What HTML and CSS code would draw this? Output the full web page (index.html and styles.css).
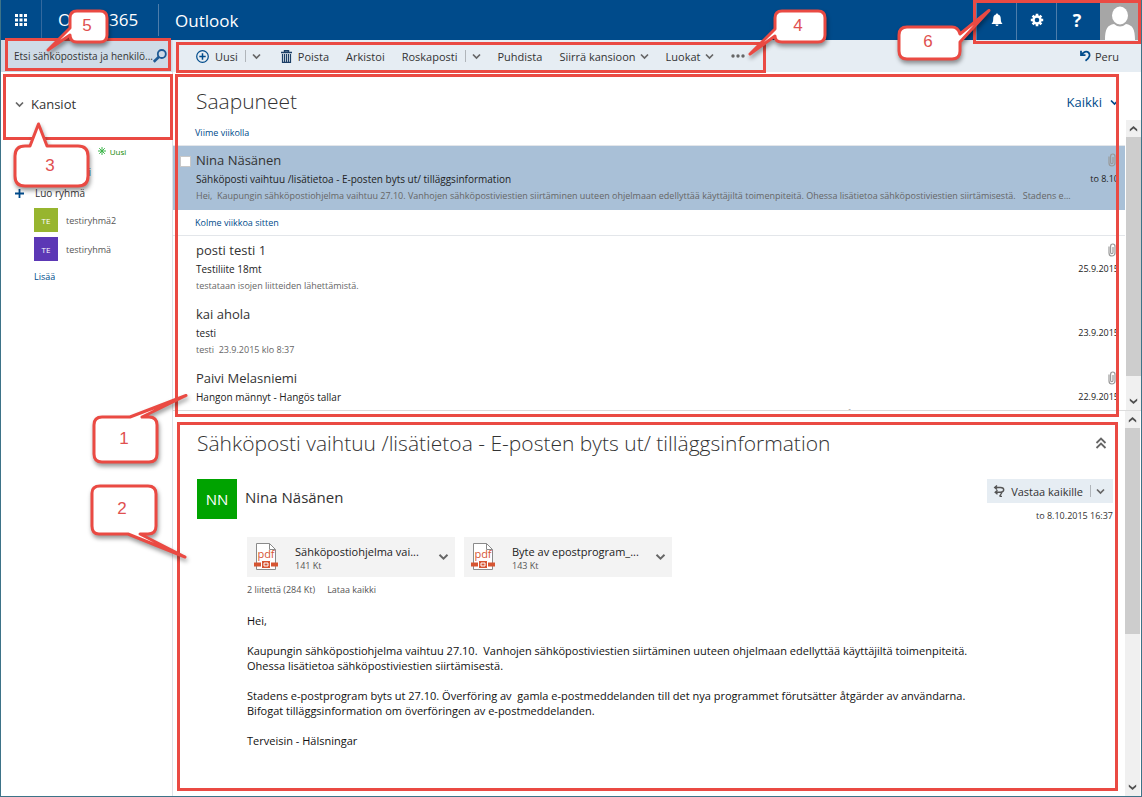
FILE: index.html
```html
<!DOCTYPE html>
<html lang="fi">
<head>
<meta charset="utf-8">
<title>Outlook</title>
<link rel="stylesheet" href="styles.css">
</head>
<body>
<svg class="defs" width="0" height="0" aria-hidden="true">
  <symbol id="chev" viewBox="0 0 9 7"><path d="M1 1.5 4.5 5 8 1.5" fill="none" stroke="currentColor" stroke-width="1.7"/></symbol>
  <symbol id="clip" viewBox="0 0 8 14"><path d="M1 3.5v6.5a3 3 0 0 0 6 0V3.2a2.2 2.2 0 0 0-4.400 0V9.500a1.200 1.200 0 0 0 2.400 0V4" fill="none" stroke="currentColor" stroke-width="1.2"/></symbol>
  <symbol id="sbarrow" viewBox="0 0 9 6"><path d="M0.800 5.500V3.200L4.500 0 8.200 3.200V5.500L4.500 2.500z" fill="#505050"/></symbol>
  <symbol id="pdf" viewBox="0 0 24 30">
    <path d="M2.500 1.500H15.500L21.500 7.500V27.500H2.500z" fill="#fff" stroke="#8a8a8a"/>
    <path d="M15.500 1.500V7.500H21.500" fill="none" stroke="#8a8a8a"/>
    <path d="M0 20.500H24V24.500H0z" fill="#d65532"/>
    <path d="M7.500 18.500H16.500V26.500H7.500z" fill="#d65532" stroke="#fff"/>
    <path d="M10 21H14V24H10z" fill="none" stroke="#fff"/>
    <text x="12" y="16" text-anchor="middle" class="pdf-label">pdf</text>
  </symbol>
</svg>
<div class="window">
  <header class="topbar">
    <button class="waffle" aria-label="Sovellukset">
      <svg width="14" height="14" viewBox="0 0 14 14" fill="#fff"><path d="M1 1h3v3H1zM5.500 1h3v3h-3zM10 1h3v3h-3zM1 5.500h3v3H1zM5.500 5.500h3v3h-3zM10 5.500h3v3h-3zM1 10h3v3H1zM5.500 10h3v3h-3zM10 10h3v3h-3z"/></svg>
    </button>
    <a class="brand" href="#">Office 365</a>
    <a class="app" href="#">Outlook</a>
    <nav class="tools">
      <button aria-label="Ilmoitukset"><svg width="12" height="14" viewBox="0 0 12 14"><path d="M6 0.500c.7 0 1 .4 1 1C9 2 9.800 3.500 9.800 6c0 2.800.6 3.800 1.700 5H.5C1.600 9.800 2.200 8.800 2.200 6 2.200 3.500 3 2 5 1.500c0-.6.3-1 1-1zM4.500 11.600h3a1.500 1.500 0 0 1-3 0z" fill="#fff"/></svg></button>
      <button aria-label="Asetukset"><svg width="14" height="14" viewBox="-7 -7 14 14"><g fill="#fff"><path id="teeth" d="M-1.300-6.200h2.600v3h-2.600zM-1.300 3.200h2.600v3h-2.600zM-6.200-1.300h3v2.600h-3zM3.200-1.300h3v2.600h-3z"/><use href="#teeth" transform="rotate(45)"/></g><circle r="3.500" fill="none" stroke="#fff" stroke-width="2.400"/></svg></button>
      <button class="help" aria-label="Ohje">?</button>
      <button class="me" aria-label="Oma profiili"><svg width="40" height="40" viewBox="0 0 40 40"><path d="M0 3h40v37H0z" fill="#a6a6a6"/><ellipse cx="20" cy="15.500" rx="8" ry="9" fill="#fff"/><path d="M5 40C5 29 7.500 25 14 24Q20 29 26 24C32.500 25 35 29 35 40z" fill="#fff"/></svg></button>
    </nav>
  </header>
  <div class="columns">
    <aside class="side">
      <form class="search">
        <input type="text" aria-label="Haku" placeholder="Etsi sähköpostista ja henkilö...">
        <button type="button" aria-label="Etsi"><svg width="14" height="14" viewBox="1 0 14 14"><circle cx="9.800" cy="5" r="4" fill="none" stroke="#1f5a94" stroke-width="1.800"/><path d="M7 7.800 1.800 12.800" stroke="#1f5a94" stroke-width="2.600"/></svg></button>
      </form>
      <button class="folders"><svg width="9" height="7"><use href="#chev"/></svg>Kansiot</button>
      <div class="groups">
        <div class="ghead"><span>Ryhmät</span><span class="new"><svg width="8" height="8" viewBox="-4 -4 8 8" stroke="#3db54a"><path d="M0-4V4M-4 0H4M-2.800-2.800 2.800 2.800M-2.800 2.800 2.800-2.800"/></svg>Uusi</span></div>
        <a class="browse" href="#">Etsi</a>
        <button class="create"><svg width="9" height="9" viewBox="0 0 9 9"><path d="M4.500 0V9M0 4.500H9" stroke="#004b8b" stroke-width="1.800"/></svg>Luo ryhmä</button>
        <a class="group" href="#"><span class="tile">TE</span>testiryhmä2</a>
        <a class="group" href="#"><span class="tile violet">TE</span>testiryhmä</a>
        <a class="more" href="#">Lisää</a>
      </div>
    </aside>
    <main class="main">
      <div class="toolbar">
        <button class="new-btn"><svg width="13" height="13" viewBox="0 0 13 13" fill="none" stroke="#004b8b"><circle cx="6.500" cy="6.500" r="5.800" stroke-width="1.200"/><path d="M6.500 3.300V9.700M3.300 6.500H9.700" stroke-width="1.500"/></svg>Uusi</button>
        <span class="bar"></span>
        <button class="drop" aria-label="Lisää uusia"><svg width="9" height="7"><use href="#chev"/></svg></button>
        <button class="delete"><svg width="11" height="13" viewBox="0 0 11 13" fill="none" stroke="#1c3f66"><path d="M0 2.500H11M3.500 2V.7H7.500V2" stroke-width="1.400"/><path d="M1.500 4V12.300H9.500V4M3.500 4V12M5.500 4V12M7.500 4V12" stroke-width="1.200"/></svg>Poista</button>
        <button class="tb">Arkistoi</button>
        <button class="tb">Roskaposti</button>
        <span class="bar"></span>
        <button class="drop" aria-label="Roskapostivalinnat"><svg width="9" height="7"><use href="#chev"/></svg></button>
        <button class="tb">Puhdista</button>
        <button class="tb">Siirrä kansioon<svg width="9" height="7"><use href="#chev"/></svg></button>
        <button class="tb">Luokat<svg width="9" height="7"><use href="#chev"/></svg></button>
        <button class="tb" aria-label="Lisää toimintoja"><svg width="14" height="4" viewBox="0 0 14 4" fill="#666"><circle cx="2" cy="2" r="1.700"/><circle cx="7" cy="2" r="1.700"/><circle cx="12" cy="2" r="1.700"/></svg></button>
        <button class="undo"><svg width="11" height="12" viewBox="0 0 11 12" fill="none" stroke="#004b8b" stroke-width="1.800"><path d="M1.500 5C3.500 1.500 6.500.8 8.500 2.500 10.500 4.500 9.800 8 5.500 10.800M1 .8V5.200H5.500"/></svg>Peru</button>
      </div>
      <section class="list">
        <div class="list-body">
          <div class="list-head"><h1>Saapuneet</h1><button class="filter">Kaikki<svg width="9" height="7"><use href="#chev"/></svg></button></div>
          <h2 class="period">Viime viikolla</h2>
          <article class="mail selected">
            <input type="checkbox" aria-label="Valitse viesti">
            <h3>Nina Näsänen</h3><svg class="clip" width="8" height="14"><use href="#clip"/></svg>
            <p class="subject">Sähköposti vaihtuu /lisätietoa - E-posten byts ut/ tilläggsinformation</p><time>to 8.10</time>
            <p class="preview">Hei, &nbsp;Kaupungin sähköpostiohjelma vaihtuu 27.10. Vanhojen sähköpostiviestien siirtäminen uuteen ohjelmaan edellyttää käyttäjiltä toimenpiteitä. Ohessa lisätietoa sähköpostiviestien siirtämisestä. &nbsp; Stadens e...</p>
          </article>
          <h2 class="period">Kolme viikkoa sitten</h2>
          <article class="mail">
            <h3>posti testi 1</h3><svg class="clip" width="8" height="14"><use href="#clip"/></svg>
            <p class="subject">Testiliite 18mt</p><time>25.9.2015</time>
            <p class="preview">testataan isojen liitteiden lähettämistä.</p>
          </article>
          <article class="mail">
            <h3>kai ahola</h3>
            <p class="subject">testi</p><time>23.9.2015</time>
            <p class="preview">testi &nbsp;23.9.2015 klo 8:37</p>
          </article>
          <article class="mail">
            <h3>Paivi Melasniemi</h3><svg class="clip" width="8" height="14"><use href="#clip"/></svg>
            <p class="subject">Hangon männyt - Hangös tallar</p><time>22.9.2015</time>
            <p class="preview">Tervetuloa Hangon Mäntyihin! Sinulle on avattu uusi varaus syksyn ajalle. Tallar i Hangö välkomnar er som gäst, alla hus är lediga hela hösten nu och även i Åbo finns det lediga</p>
          </article>
        </div>
        <div class="scroll upper"><svg width="9" height="6"><use href="#sbarrow"/></svg><div class="thumb"></div><svg class="down" width="9" height="6"><use href="#sbarrow"/></svg></div>
      </section>
      <section class="reading">
        <div class="read-body">
          <div class="read-title"><h2>Sähköposti vaihtuu /lisätietoa - E-posten byts ut/ tilläggsinformation</h2>
            <button aria-label="Tiivistä"><svg width="12" height="12" viewBox="0 0 12 12" fill="none" stroke="#666" stroke-width="1.800"><path d="M1.500 6 6 1.500 10.500 6M1.500 11 6 6.500 10.500 11"/></svg></button></div>
          <div class="from">
            <span class="avatar">NN</span><span class="name">Nina Näsänen</span>
            <div class="actions">
              <div class="reply"><button><svg width="12" height="12" viewBox="0 0 12 12" fill="none" stroke="#555" stroke-width="1.400"><path d="M4 .5 1.700 2.500 4 4.500M1.700 2.500H7.500C11.800 2.500 11.800 7 7.500 7.200H2M4.500 5.200 2.200 7.200 4.500 9.200M9.500 6.500 6.500 11.500M7 11.500H9"/></svg>Vastaa kaikille</button><span class="bar"></span><button class="drop" aria-label="Vastausvalinnat"><svg width="9" height="7"><use href="#chev"/></svg></button></div>
              <time>to 8.10.2015 16:37</time>
            </div>
          </div>
          <div class="content">
            <div class="files">
              <button class="file"><svg width="24" height="30"><use href="#pdf"/></svg><span><b>Sähköpostiohjelma vai...</b><small>141 Kt</small></span><svg class="open" width="11" height="8"><use href="#chev"/></svg></button>
              <button class="file"><svg width="24" height="30"><use href="#pdf"/></svg><span><b>Byte av epostprogram_...</b><small>143 Kt</small></span><svg class="open" width="11" height="8"><use href="#chev"/></svg></button>
            </div>
            <div class="file-info"><span>2 liitettä (284 Kt)</span><a href="#">Lataa kaikki</a></div>
            <div class="message">
              <p>Hei,</p>
              <p>Kaupungin sähköpostiohjelma vaihtuu 27.10. &nbsp;Vanhojen sähköpostiviestien siirtäminen uuteen ohjelmaan edellyttää käyttäjiltä toimenpiteitä.<br>Ohessa lisätietoa sähköpostiviestien siirtämisestä.</p>
              <p>Stadens e-postprogram byts ut 27.10. Överföring av &nbsp;gamla e-postmeddelanden till det nya programmet förutsätter åtgärder av användarna.<br>Bifogat tilläggsinformation om överföringen av e-postmeddelanden.</p>
              <p>Terveisin - Hälsningar</p>
            </div>
          </div>
        </div>
        <div class="scroll lower"><svg width="9" height="6"><use href="#sbarrow"/></svg><div class="thumb"></div><svg class="down" width="9" height="6"><use href="#sbarrow"/></svg></div>
      </section>
    </main>
  </div>
  <div class="notes">
    <div class="frame f-search"></div>
    <div class="frame f-toolbar"></div>
    <div class="frame f-folders"></div>
    <div class="frame f-list"></div>
    <div class="frame f-reading"></div>
    <div class="frame f-account"></div>
    <svg class="callouts" width="840" height="600" viewBox="0 0 840 600">
      <path d="M142 417H149Q157 417 157 425V454Q157 462 149 462H102Q94 462 94 454V425Q94 417 102 417H130L186 395.500z"/>
      <path d="M128 534H99Q92 534 92 526V493Q92 486 100 486H148Q156 486 156 494V526Q156 534 148 534H140L185 557z"/>
      <path d="M30 146 38.500 124 47 146H78Q88 146 88 156V176Q88 186 78 186H25Q15 186 15 176V156Q15 146 25 146z"/>
      <path d="M775 29V18Q775 11 782 11H818Q825 11 825 18V35Q825 42 818 42H782Q775 42 775 36L750 54z"/>
      <path d="M70 28V18Q70 11 77 11H100Q107 11 107 18V35Q107 42 100 42H77Q70 42 70 35L48 50z"/>
      <text x="124" y="444">1</text><text x="122" y="514">2</text><text x="50" y="171">3</text><text x="798" y="31">4</text><text x="87" y="31">5</text>
    </svg>
    <svg class="callouts right" width="252" height="70" viewBox="890 0 252 70">
      <path d="M960 34 989 10.500 960 42V51Q960 59 952 59H907Q899 59 899 51V35Q899 27 907 27H952Q958 27 960 34z"/>
      <text x="928" y="47">6</text>
    </svg>
  </div>
</div>
</body>
</html>
```
FILE: styles.css
```css
* { box-sizing: border-box; }
body { margin: 0; font-family: "Open Sans", "Noto Sans", sans-serif; font-size: 11px; color: #333; background: #fff; }
h1, h2, h3, p { margin: 0; font-weight: 400; }
button { border: 0; background: none; padding: 0; font: inherit; color: inherit; display: flex; align-items: center; white-space: nowrap; }
a { color: inherit; text-decoration: none; }
svg { flex: none; display: block; }
.defs { position: absolute; }
.window { position: relative; display: flex; flex-direction: column; height: 100vh; min-height: 600px; border: solid #3d7388; border-width: 0 1px 1px; overflow: hidden; }

.topbar { display: flex; align-items: center; height: 40px; flex: none; background: #004b8b; color: #fff; font-size: 17px; }
.waffle { width: 41px; height: 40px; justify-content: center; border-right: 1px solid #33699f; }
.brand { width: 117px; padding-left: 16px; line-height: 32px; border-right: 1px solid #4d7dab; }
.app { padding-left: 16px; }
.tools { display: flex; margin-left: auto; padding-right: 1px; }
.tools button { width: 40px; height: 40px; justify-content: center; border-left: 1px solid #4d7dab; }
.tools .help { font-weight: 700; font-size: 18px; width: 44px; padding-right: 3px; }
.tools .me { border: 0; }

.columns { display: flex; flex: 1; min-height: 0; }
.side { width: 172px; flex: none; border-right: 1px solid #dfe3e8; }
.search { display: flex; align-items: center; height: 32px; padding: 0 5px 0 13px; background: #cfdbe7; }
.search input { flex: 1; min-width: 0; padding: 0; border: 0; outline: 0; background: none; font: inherit; font-size: 10px; color: #333; }
.search input::placeholder { color: #333; opacity: 1; }
.folders { height: 64px; padding-left: 14px; gap: 7px; font-size: 13px; }
.folders svg { color: #666; }
.groups { display: flex; flex-direction: column; align-items: flex-start; padding-top: 6px; font-size: 10px; }
.ghead { display: flex; align-items: center; gap: 28px; height: 18px; padding-left: 33px; }
.new { display: flex; align-items: center; gap: 4px; color: #108a00; font-size: 8px; }
.browse { width: 90px; height: 21px; line-height: 24px; text-align: right; color: #004b8b; }
.create { height: 24px; padding-left: 14px; gap: 11px; }
.group { display: flex; align-items: center; gap: 8px; height: 24px; margin: 3px 0 2px 33px; color: #555; font-size: 9px; }
.tile { width: 24px; height: 24px; display: grid; place-items: center; background: #97b52f; color: #fff; font-size: 8px; }
.violet { background: #5c38b5; }
.more { margin: 7px 0 0 33px; font-size: 9px; color: #004b8b; }

.main { flex: 1; min-width: 0; display: flex; flex-direction: column; }
.toolbar { display: flex; align-items: center; height: 32px; flex: none; padding: 0 22px 0 23px; background: #e6edf3; }
.toolbar button { height: 30px; gap: 4px; }
.toolbar svg { color: #666; }
.toolbar .new-btn, .toolbar .delete { gap: 6px; }
.bar { width: 1px; height: 12px; margin: 0 6px 0 7px; background: #b0b5ba; }
.delete { margin-left: 20px; }
.tb { margin-left: 17px; }
.toolbar .undo { margin-left: auto; gap: 4px; }

.list { display: flex; flex: 0 0 339px; border-bottom: 1px solid #dcdcdc; overflow: hidden; }
.list-body { flex: 1; min-width: 0; padding-right: 1px; }
.list-head { display: flex; justify-content: space-between; align-items: center; height: 48px; padding: 10px 6px 0 23px; }
.list-head h1 { font-size: 21px; line-height: 28px; font-weight: 300; }
.filter { gap: 8px; padding-top: 2px; font-size: 13px; color: #004b8b; }
.period { height: 26px; line-height: 26px; padding-left: 22px; border-bottom: 1px solid #e3e6ea; font-size: 9px; color: #004b8b; }
.mail { position: relative; display: grid; grid-template-columns: 1fr auto; grid-template-rows: 20px 17px 16px; align-items: center; height: 64px; padding: 4px 6px 0 23px; }
.selected { background: #a9c0d7; }
.mail input { position: absolute; left: 7px; top: 10px; width: 11px; height: 11px; margin: 0; appearance: none; background: #fff; border: 1px solid #c8c8c8; }
.mail h3 { font-size: 13px; grid-column: 1; }
.clip { color: #999; justify-self: end; margin-right: 3px; }
.subject { grid-column: 1; font-size: 10px; color: #222; }
.mail time { font-size: 9px; color: #222; }
.preview { grid-column: 1 / -1; font-size: 9px; color: #666; white-space: nowrap; overflow: hidden; }
.scroll { display: flex; flex-direction: column; align-items: center; width: 15px; flex: none; padding: 6px 0; background: #f0f0f0; }
.thumb { width: 15px; margin-top: 5px; background: #cdcdcd; }
.down { margin-top: auto; transform: rotate(180deg); }
.upper { margin-top: 48px; }
.upper .thumb { height: 86%; }
.lower .thumb { height: 206px; }

.reading { display: flex; flex: 1; min-height: 0; padding-right: 1px; }
.read-body { flex: 1; min-width: 0; padding: 16px 12px 0 24px; overflow: hidden; }
.read-title { display: flex; align-items: center; justify-content: space-between; height: 32px; padding-right: 6px; }
.read-title h2 { font-size: 21px; font-weight: 300; white-space: nowrap; }
.from { display: flex; align-items: flex-start; gap: 8px; margin-top: 20px; height: 40px; }
.avatar { display: grid; place-items: center; width: 40px; height: 40px; background: #00a300; color: #fff; font-size: 15px; }
.name { font-size: 15px; line-height: 36px; }
.actions { margin-left: auto; display: flex; flex-direction: column; align-items: flex-end; gap: 6px; }
.actions time { font-size: 9px; line-height: 14px; }
.reply { display: flex; align-items: center; height: 24px; padding: 0 8px 0 6px; background: #e6edf3; }
.reply button { gap: 6px; color: #333; }
.reply .drop { color: #666; }
.reply .bar { margin: 0 5px 0 7px; }
.content { padding-left: 50px; }
.files { display: flex; gap: 9px; margin-top: 18px; }
.file { width: 208px; height: 40px; padding: 0 6px 0 7px; background: #f3f3f3; text-align: left; }
.file span { flex: 1; margin-left: 17px; padding-top: 2px; }
.file b, .file small { display: block; font-weight: 400; }
.file b { font-size: 11px; line-height: 14px; color: #222; }
.file small { font-size: 9px; line-height: 13px; color: #555; }
.file .open { color: #666; }
.pdf-label { font: 11px "Open Sans", sans-serif; fill: #d65532; }
.file-info { display: flex; gap: 12px; margin-top: 5px; font-size: 9px; line-height: 16px; color: #555; }
.message { margin-top: 15px; font-size: 11px; line-height: 15px; color: #111; }
.message p { margin-bottom: 15px; white-space: nowrap; }

.notes { position: absolute; inset: 0 -1px -1px; pointer-events: none; }
.frame { position: absolute; border: 3px solid #ea4a43; }
.f-search { left: 5px; top: 38px; width: 166px; height: 33px; }
.f-toolbar { left: 176px; top: 42px; width: 590px; height: 31px; }
.f-folders { left: 3px; top: 74px; width: 170px; height: 66px; }
.f-list { left: 175px; right: 23px; top: 74px; height: 343px; }
.f-reading { left: 177px; right: 24px; top: 422px; bottom: 6px; }
.f-account { right: 1px; top: 0; width: 168px; height: 44px; }
.callouts { position: absolute; left: 0; top: 0; }
.callouts.right { left: auto; right: 0; }
.callouts path { fill: #fff; stroke: #ea4a43; stroke-width: 3; stroke-linejoin: round; filter: drop-shadow(1px 3px 2px rgba(0, 0, 0, 0.4)); }
.callouts text { font: 17px "Liberation Sans", sans-serif; fill: #e05050; text-anchor: middle; }
```
